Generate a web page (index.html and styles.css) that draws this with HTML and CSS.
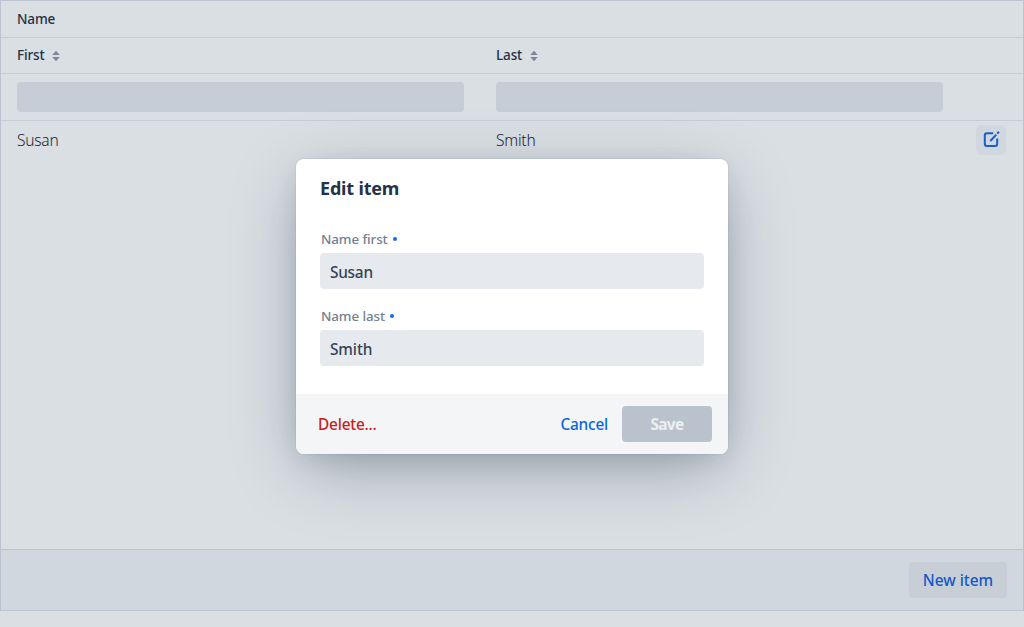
FILE: index.html
```html
<!DOCTYPE html>
<html lang="en">
<head>
<meta charset="utf-8">
<title>Edit item</title>
<link rel="stylesheet" href="styles.css">
</head>
<body>
<main class="crud">
  <div class="grid">
    <div class="row group-row"><span class="head">Name</span></div>
    <div class="row sort-row">
      <div class="cell"><span class="head">First</span><svg class="sorter" viewBox="0 0 8 12"><path d="M0.3 5L4 0.8L7.7 5ZM0.3 7L4 11.2L7.7 7Z"/></svg></div>
      <div class="cell"><span class="head">Last</span><svg class="sorter" viewBox="0 0 8 12"><path d="M0.3 5L4 0.8L7.7 5ZM0.3 7L4 11.2L7.7 7Z"/></svg></div>
      <div></div>
    </div>
    <div class="row filter-row">
      <div class="cell"><div class="filter"></div></div>
      <div class="cell"><div class="filter"></div></div>
      <div></div>
    </div>
    <div class="row data-row">
      <div class="cell"><span>Susan</span></div>
      <div class="cell"><span>Smith</span></div>
      <button class="edit" aria-label="Edit"><svg viewBox="0 0 30 30"><path d="M17.2 8.3H11Q8.8 8.3 8.8 10.5V18.8Q8.8 21 11 21H19Q21.2 21 21.2 18.8V13.4"/><path d="M14.3 16L20.3 9.6M21.2 8.6L22.9 6.8"/></svg></button>
    </div>
  </div>
  <footer class="toolbar"><button class="new"><span>New item</span></button></footer>
</main>
<div class="overlay">
  <section class="dialog" role="dialog">
    <div class="body">
      <h3><span>Edit item</span></h3>
      <label class="label first"><span>Name first</span><i class="dot"></i></label>
      <div class="field susan"><span>Susan</span></div>
      <label class="label second"><span>Name last</span><i class="dot"></i></label>
      <div class="field"><span>Smith</span></div>
    </div>
    <div class="actions">
      <button class="delete"><span>Delete...</span></button>
      <button class="cancel"><span>Cancel</span></button>
      <button class="save"><span>Save</span></button>
    </div>
  </section>
</div>
</body>
</html>
```
FILE: styles.css
```css
* { box-sizing: border-box; }
body { margin: 0; height: 627px; overflow: hidden; background: #dadfe3; color: #253246; font: 400 16px/26px "Noto Sans", "Open Sans", sans-serif; }
button { border: 0; padding: 0; background: none; font: inherit; font-size: 15.4px; font-weight: 500; border-radius: 4px; }
span { white-space: nowrap; }
.crud { height: 611px; border: 1px solid #bac3cf; display: flex; flex-direction: column; }
.grid { flex: 1; }
.row { display: grid; grid-template-columns: 479px 479px 64px; align-items: center; border-bottom: 1px solid #c5ccd5; }
.group-row { height: 37px; padding-left: 16px; }
.sort-row { height: 36px; padding-bottom: 1px; }
.filter-row { height: 47px; }
.data-row { height: 38px; border: 0; font-size: 15.6px; font-weight: 350; letter-spacing: -.25px; color: #1a2538; }
.cell { padding: 0 16px; display: flex; align-items: center; }
.head { font-size: 13.5px; font-weight: 500; letter-spacing: -.15px; }
.sorter { width: 8px; height: 12px; margin: 2px 0 0 8px; fill: #7b8798; }
.filter { height: 30px; width: 447px; border-radius: 4px; background: #c6cdd7; }
.edit { width: 30px; height: 30px; margin-left: 17px; background: #d0d7de; border-radius: 6px; }
.edit svg { display: block; width: 30px; height: 30px; fill: none; stroke: #1760cc; stroke-width: 2; }
.toolbar { height: 61px; border-top: 1px solid #bac3cf; background: #d0d7de; padding-right: 16px; display: flex; justify-content: flex-end; align-items: center; }
.new { width: 98px; height: 36px; padding-top: 1px; background: #c7ced6; color: #1259c7; }
.overlay { position: absolute; inset: 0; display: flex; justify-content: center; padding-top: 159px; }
.dialog { width: 432px; height: 295px; border-radius: 8px; background: #fff; overflow: hidden; box-shadow: 0 0 0 1px rgba(25,59,103,.05), 0 6px 24px -4px rgba(27,43,65,.12), 0 18px 64px -8px rgba(28,48,74,.38); }
.body { height: 235px; padding: 16px 24px 0; }
h3 { margin: 0; font-size: 18px; line-height: 26px; font-weight: 700; letter-spacing: -.18px; }
.label { display: flex; align-items: center; padding-left: 1px; font-size: 13.4px; line-height: 20px; font-weight: 500; letter-spacing: -.1px; color: #758091; }
.label.first { margin-top: 28px; }
.label.second { margin-top: 17px; }
.dot { width: 4px; height: 4px; border-radius: 50%; background: #146be8; margin-left: 5px; }
.field { margin-top: 4px; height: 36px; padding: 1px 10px 0; border-radius: 4px; background: #e6e9ed; font-size: 15.4px; font-weight: 500; line-height: 37px; letter-spacing: -.1px; color: #354357; }
.field.susan { letter-spacing: -.25px; }
.actions { height: 60px; background: #f3f5f7; padding: 0 16px 0 22px; display: flex; align-items: center; }
.delete { padding-top: 1px; color: #c91d1b; letter-spacing: -.2px; }
.cancel { padding-top: 1px; color: #0c66df; margin-left: auto; margin-right: 14px; letter-spacing: -.2px; }
.save { width: 90px; height: 36px; padding-top: 1px; background: #bac3cd; color: #eceff2; font-weight: 700; letter-spacing: -.7px; }
```
